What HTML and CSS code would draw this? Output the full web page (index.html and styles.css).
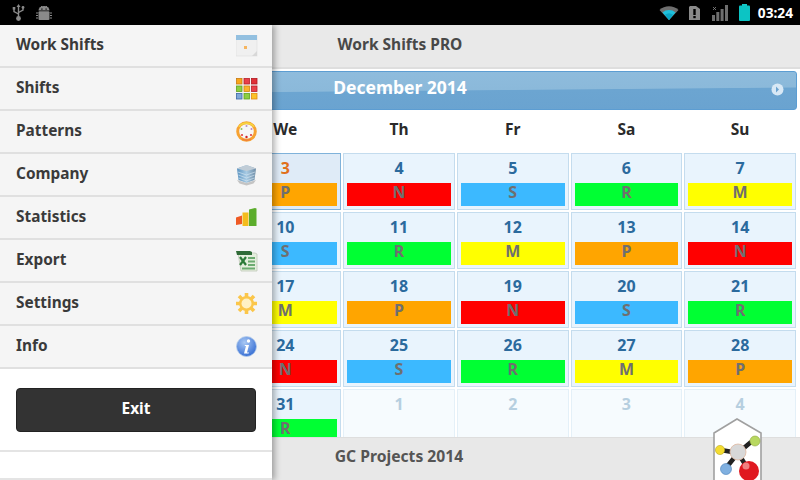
FILE: index.html
```html
<!DOCTYPE html>
<html lang="en">
<head>
<meta charset="utf-8">
<title>Work Shifts PRO</title>
<link rel="stylesheet" href="styles.css">
</head>
<body>
<div class="device">
  <header class="status">
    <div class="status-left">
      <svg class="ic-usb" width="13" height="17" viewBox="0 0 13 17"><g fill="none" stroke="#8a8a8a" stroke-width="1.4"><path d="M6.500 2V13"/><path d="M2 5v2.500L6.500 10"/><path d="M11 4v2L6.500 8.500"/></g><path d="M6.500 0l2 3h-4z" fill="#8a8a8a"/><rect x=".7" y="3" width="2.600" height="2.600" fill="#8a8a8a"/><circle cx="11" cy="3.400" r="1.400" fill="#8a8a8a"/><circle cx="6.500" cy="14.500" r="2.400" fill="#8a8a8a"/></svg>
      <svg class="ic-bug" width="16" height="14" viewBox="0 0 16 14"><path d="M2.500 4.500a5.500 4.500 0 0 1 11 0z" fill="#8a8a8a"/><rect x="2.500" y="5.200" width="11" height="8.800" rx="1" fill="#8a8a8a"/><path d="M5 0l1.400 1.500M11 0L9.600 1.500M0 7h2M0 9.500h2M0 12h2M14 7h2M14 9.500h2M14 12h2" stroke="#8a8a8a"/><rect x="5.300" y="2.500" width="1.200" height="1.200" fill="#000"/><rect x="9.500" y="2.500" width="1.200" height="1.200" fill="#000"/></svg>
    </div>
    <div class="status-right">
      <svg class="ic-wifi" width="20" height="15" viewBox="0 0 20 15"><path d="M0.500 5a14 14 0 0 1 19 0L10 15z" fill="#6f6f6f"/><path d="M3.500 7.500a10 10 0 0 1 13 0L10 15z" fill="#1fc0dc"/><path d="M6 9.700a6.500 6.500 0 0 1 8 0L10 15z" fill="#0aa5c5"/></svg>
      <svg class="ic-alert" width="11" height="14" viewBox="0 0 11 14"><path d="M1 0h6l4 3v11H0V1z" fill="#8a8a8a"/><rect x="4.300" y="3" width="2.400" height="6" fill="#000"/><rect x="4.300" y="10" width="2.400" height="2.200" fill="#000"/></svg>
      <svg class="ic-signal" width="16" height="16" viewBox="0 0 16 16"><path d="M1 2l3 3M4 2L1 5" stroke="#8a8a8a" stroke-width=".8"/><rect x="0" y="10" width="3" height="6" fill="#6e6e6e"/><rect x="4.300" y="7" width="3" height="9" fill="#6e6e6e"/><rect x="8.600" y="4" width="3" height="12" fill="#6e6e6e"/><rect x="13" y="0" width="3" height="16" fill="#6e6e6e"/></svg>
      <svg class="ic-batt" width="11" height="17" viewBox="0 0 11 17"><rect x="3" y="0" width="5" height="2" fill="#14c8c8"/><rect x="0" y="1.500" width="11" height="15.500" rx="1" fill="#0cc4c4"/></svg>
      <span class="clock">03:24</span>
    </div>
  </header>

  <div class="screen">
    <nav class="drawer">
      <ul class="menu">
        <li class="menu-item"><span>Work Shifts</span>
          <svg class="menu-icon" viewBox="0 0 22 22"><rect x="0" y="0" width="21" height="21" fill="#f0f0f0" stroke="#dcdcdc" stroke-width=".6"/><rect x="0" y="0" width="21" height="5" fill="#93c0e0"/><rect x="8" y="11" width="3" height="3" fill="#f5b560"/><path d="M21 16v5h-5z" fill="#d8d8d8"/></svg></li>
        <li class="menu-item"><span>Shifts</span>
          <svg class="menu-icon" viewBox="0 0 22 22"><rect x=".5" y=".5" width="5.500" height="5.500" fill="#f9a51a" stroke="#c77a10" stroke-width=".8"/><rect x="8" y=".5" width="5.500" height="5.500" fill="#e8404a" stroke="#b82028" stroke-width=".8"/><rect x="15.500" y=".5" width="5.500" height="5.500" fill="#e03038" stroke="#b01820" stroke-width=".8"/><rect x=".5" y="8" width="5.500" height="5.500" fill="#8ccf40" stroke="#5fa020" stroke-width=".8"/><rect x="8" y="8" width="5.500" height="5.500" fill="#fbb22c" stroke="#d08810" stroke-width=".8"/><rect x="15.500" y="8" width="5.500" height="5.500" fill="#e8404a" stroke="#b82028" stroke-width=".8"/><rect x=".5" y="15.500" width="5.500" height="5.500" fill="#7fa8d8" stroke="#3a68a8" stroke-width=".8"/><rect x="8" y="15.500" width="5.500" height="5.500" fill="#8ccf40" stroke="#5fa020" stroke-width=".8"/><rect x="15.500" y="15.500" width="5.500" height="5.500" fill="#fcc228" stroke="#e08a10" stroke-width=".8"/></svg></li>
        <li class="menu-item"><span>Patterns</span>
          <svg class="menu-icon" viewBox="0 0 22 22"><circle cx="10.500" cy="10.500" r="8.800" fill="#f6f6f6" stroke="#f7a232" stroke-width="3"/><path d="M3 5.800a9.500 9.500 0 0 1 15 0" fill="none" stroke="#f6d640" stroke-width="1.800"/><path d="M6 18a9.500 9.500 0 0 0 9 0" fill="none" stroke="#f0803a" stroke-width="1.400"/><circle cx="10.500" cy="5" r="1" fill="#b090c8"/><circle cx="5.500" cy="8" r="1" fill="#90c060"/><circle cx="15.500" cy="8" r="1" fill="#c080c0"/><circle cx="6" cy="14" r="1.100" fill="#e04040"/><circle cx="15" cy="14" r="1.100" fill="#e04040"/><circle cx="10.500" cy="16" r="1.200" fill="#d02020"/></svg></li>
        <li class="menu-item"><span>Company</span>
          <svg class="menu-icon" viewBox="0 0 22 22"><defs><linearGradient id="srv" x1="0" x2="1" y1="0" y2="0"><stop offset="0" stop-color="#5b93c0"/><stop offset=".5" stop-color="#a8cbe4"/><stop offset="1" stop-color="#6f8da6"/></linearGradient></defs><path d="M1 4.500L10.500 1 20 4.500 18.500 16l-8 3-8-3z" fill="url(#srv)"/><path d="M1 4.500L10.500 1 20 4.500l-9.500 2.500z" fill="#c0ccd6"/><path d="M2 8l8.500 3L19 8M2.300 11l8.200 3 8.200-3M2.600 14l7.900 2.800 7.900-2.800" fill="none" stroke="#dcebf5" stroke-width=".6"/><path d="M1 16l9.500 3L20 16l-2.500 3.500-7 2-7-2z" fill="#c4c4c4"/></svg></li>
        <li class="menu-item"><span>Statistics</span>
          <svg class="menu-icon" viewBox="0 0 22 22"><path d="M0 10.500l6-2v8.500L0 18z" fill="#ef5a24"/><rect x="6.500" y="5.500" width="6" height="13.500" fill="#f4bc1c"/><path d="M13 2.500L19 1l1.500 .5V19H13z" fill="#5cad2c"/></svg></li>
        <li class="menu-item"><span>Export</span>
          <svg class="menu-icon" viewBox="0 0 22 22"><path d="M2 3h17l2 1v17H5z" fill="#e4eedd" stroke="#bfc8b8" stroke-width=".8"/><path d="M0 1h14l2 1v3H1z" fill="#2f6b37"/><path d="M4 7l6 8M10 7l-6 8" stroke="#2c7a38" stroke-width="2.200"/><path d="M12 8h7M12 11.500h7M12 15h7M6 18.500h13" stroke="#6cab70" stroke-width="2"/></svg></li>
        <li class="menu-item"><span>Settings</span>
          <svg class="menu-icon" viewBox="0 0 22 22"><g stroke="#fbc64a" stroke-width="3.600"><path d="M10.500 0v21M0 10.500h21M3 3l15 15M18 3L3 18"/></g><circle cx="10.500" cy="10.500" r="7.500" fill="#fbc64a"/><circle cx="10.500" cy="10.500" r="5" fill="#fff1c4"/></svg></li>
        <li class="menu-item"><span>Info</span>
          <svg class="menu-icon" viewBox="0 0 22 22"><defs><radialGradient id="inf" cx=".4" cy=".3" r=".8"><stop offset="0" stop-color="#a8c8f4"/><stop offset="1" stop-color="#2a64d0"/></radialGradient></defs><circle cx="10.500" cy="10.500" r="10" fill="url(#inf)" stroke="#b4cbea" stroke-width=".8"/><circle cx="12.500" cy="5" r="1.700" fill="#fff"/><path d="M9 9h4l-2 7.500h2l-.4 1H8l2-7.500H8.600z" fill="#fff"/></svg></li>
      </ul>
      <div class="exit-wrap"><button class="exit" type="button">Exit</button></div>
      <div class="drawer-foot"></div>
    </nav>

    <header class="actionbar">Work Shifts PRO</header>

    <main class="calendar">
      <div class="month">
        <span>December 2014</span>
        <svg class="next" width="13" height="13" viewBox="0 0 13 13"><circle cx="6.500" cy="6.500" r="6" fill="#d8e8f5"/><path d="M5 3.500l3 3-3 3z" fill="#6ba3d0"/></svg>
      </div>
      <div class="days">
        <div></div><div></div><div>We</div><div>Th</div><div>Fr</div><div>Sa</div><div>Su</div>
      </div>
      <div class="grid">
        <div class="cell"></div>
        <div class="cell"></div>
        <div class="cell today"><b>3</b><i class="bar p">P</i></div>
        <div class="cell"><b>4</b><i class="bar n">N</i></div>
        <div class="cell"><b>5</b><i class="bar s">S</i></div>
        <div class="cell"><b>6</b><i class="bar r">R</i></div>
        <div class="cell"><b>7</b><i class="bar m">M</i></div>

        <div class="cell"></div>
        <div class="cell"></div>
        <div class="cell"><b>10</b><i class="bar s">S</i></div>
        <div class="cell"><b>11</b><i class="bar r">R</i></div>
        <div class="cell"><b>12</b><i class="bar m">M</i></div>
        <div class="cell"><b>13</b><i class="bar p">P</i></div>
        <div class="cell"><b>14</b><i class="bar n">N</i></div>

        <div class="cell"></div>
        <div class="cell"></div>
        <div class="cell"><b>17</b><i class="bar m">M</i></div>
        <div class="cell"><b>18</b><i class="bar p">P</i></div>
        <div class="cell"><b>19</b><i class="bar n">N</i></div>
        <div class="cell"><b>20</b><i class="bar s">S</i></div>
        <div class="cell"><b>21</b><i class="bar r">R</i></div>

        <div class="cell"></div>
        <div class="cell"></div>
        <div class="cell"><b>24</b><i class="bar n">N</i></div>
        <div class="cell"><b>25</b><i class="bar s">S</i></div>
        <div class="cell"><b>26</b><i class="bar r">R</i></div>
        <div class="cell"><b>27</b><i class="bar m">M</i></div>
        <div class="cell"><b>28</b><i class="bar p">P</i></div>

        <div class="cell"></div>
        <div class="cell"></div>
        <div class="cell"><b>31</b><i class="bar r">R</i></div>
        <div class="cell off"><b>1</b></div>
        <div class="cell off"><b>2</b></div>
        <div class="cell off"><b>3</b></div>
        <div class="cell off"><b>4</b></div>
      </div>
    </main>

    <footer class="footbar">
      <span>GC Projects 2014</span>
      <svg class="logo" width="50" height="64" viewBox="0 0 50 64"><path d="M1 15L24 1l24 14v48H1z" fill="#fff" stroke="#a0a0a0" stroke-width="1.600"/><path d="M8 32l17 3M38 24L25 35M13 50l12-15M25 35l10 16" stroke="#222" stroke-width="4.500"/><circle cx="7" cy="32" r="4.600" fill="#f4dc30" stroke="#b8a820" stroke-width=".6"/><circle cx="42" cy="23" r="5" fill="#b8d860" stroke="#90a840" stroke-width=".6"/><circle cx="13" cy="51" r="5.500" fill="#80b0e0" stroke="#4880b8" stroke-width=".6"/><circle cx="25" cy="34" r="8" fill="#d8d8d8" stroke="#e0b8a0" stroke-width=".8"/><circle cx="36" cy="53" r="10" fill="#e01820"/><circle cx="33" cy="48" r="3.500" fill="#f08080"/></svg>
    </footer>
  </div>
</div>
</body>
</html>
```
FILE: styles.css
```css
* { box-sizing: border-box; margin: 0; padding: 0; }
html, body { width: 800px; height: 480px; overflow: hidden; }
body { font-family: "Noto Sans", "Open Sans", sans-serif; background: #fff; }

.device { width: 800px; height: 480px; display: flex; flex-direction: column; }

/* status bar */
.status { height: 25px; flex: none; background: #000; display: flex; justify-content: space-between; align-items: center; }
.status-left { display: flex; align-items: center; gap: 11px; padding-left: 12px; }
.status-right { display: flex; align-items: center; padding-right: 7px; }
.ic-wifi { margin-right: 10px; }
.ic-alert { margin-right: 12px; margin-top: 1px; }
.ic-signal { margin-right: 11px; margin-top: 1px; }
.ic-batt { margin-right: 8px; }
.clock { color: #fff; font-weight: 700; font-size: 13.700px; line-height: 25px; }

/* screen */
.screen { position: relative; flex: 1; min-height: 0; display: flex; flex-direction: column; overflow: hidden; }

.actionbar { height: 44px; flex: none; background: #e9e9e9; border-bottom: 2px solid #dedede; color: #484848; font-weight: 700; font-size: 15.500px; line-height: 39px; text-align: center; }

.calendar { flex: 1; min-height: 0; overflow: hidden; padding: 2px 3px 0; background: #fff; }

.month { position: relative; height: 39px; border: 1px solid #5c9dd2; border-radius: 3px; background: linear-gradient(179.500deg, #8fbcdd 0, #8bb9da 50%, #6ca5d1 52%, #6aa3d0 100%); color: #fff; font-weight: 700; font-size: 17.500px; line-height: 31px; text-align: center; display: flex; justify-content: center; }
.next { position: absolute; right: 12px; top: 11px; }

.days { display: grid; grid-template-columns: repeat(7, 1fr); gap: 2px; height: 43px; margin: 0 1px 0 -1px; font-weight: 700; font-size: 15.500px; line-height: 38px; color: #2a2a2a; text-align: center; }

.grid { display: grid; grid-template-columns: repeat(7, 1fr); grid-auto-rows: 57px; gap: 2px; margin: 0 1px 0 -1px; }

.cell { border: 1px solid #c4dcee; background: #e9f4fd; display: flex; flex-direction: column; padding: 0 3px; align-items: stretch; }
.cell b { height: 29px; font-size: 16px; line-height: 29px; color: #2b6a9d; text-align: center; font-weight: 700; }
.cell .bar { height: 23px; font-style: normal; font-weight: 700; font-size: 16px; line-height: 18px; color: #6f6f6f; text-align: center; }
.today { background: #dfebf7; border-color: #7fb2da; }
.today b { color: #e0701c; }
.off { background: #f6fbfe; border-color: #e4f0f8; }
.off b { color: #b6cfe0; }
.p { background: #ffa500; }
.n { background: #ff0000; }
.s { background: #3cb9ff; }
.r { background: #00ff33; }
.m { background: #ffff00; }

.footbar { position: relative; height: 43px; flex: none; background: #e8e8e8; border-top: 1px solid #dedede; color: #555; font-weight: 700; font-size: 15.700px; line-height: 36px; text-align: center; padding-right: 2px; }
.logo { position: absolute; left: 713px; top: -20px; }

/* drawer overlay */
.drawer { position: absolute; z-index: 2; left: 0; top: 0; bottom: 0; width: 272px; background: #fff; box-shadow: 3px 0 6px rgba(0,0,0,.3); display: flex; flex-direction: column; }
.menu { list-style: none; }
.menu-item { height: 43px; background: #f5f5f5; border-bottom: 2px solid #e0e0e0; padding: 0 14px 0 16px; display: flex; justify-content: space-between; align-items: center; color: #3a3a3a; font-weight: 700; font-size: 15.400px; }
.menu-item span { margin-top: -3px; }
.menu-icon { width: 22px; height: 22px; margin-top: 1px; }
.exit-wrap { height: 83px; padding: 19px 16px 0; border-bottom: 2px solid #e4e4e4; }
.exit { display: block; width: 100%; height: 44px; padding-bottom: 5px; background: #333; border: 1px solid #222; border-radius: 4px; color: #fff; font-family: inherit; font-weight: 700; font-size: 15.500px; }
.drawer-foot { flex: 1; border-bottom: 2px solid #e4e4e4; }
```
